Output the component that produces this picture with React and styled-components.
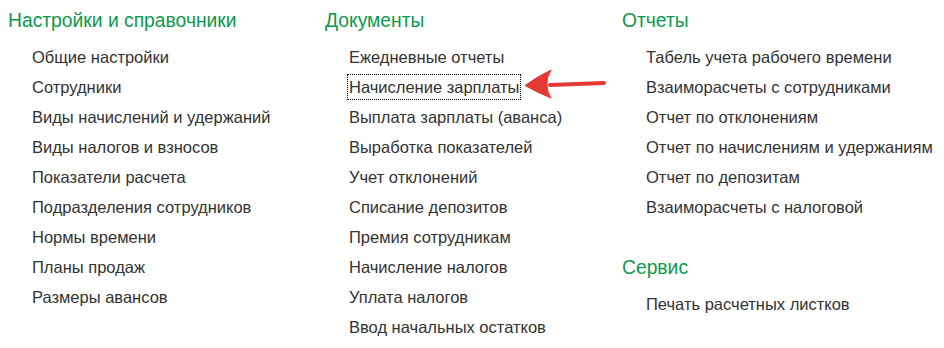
import styled, { createGlobalStyle } from 'styled-components';

const GlobalStyle = createGlobalStyle`
  body {
    margin: 0;
    background: #fff;
    font-family: "Liberation Sans", Arial, sans-serif;
  }
`;

const Page = styled.div`
  position: relative;
  display: grid;
  grid-template-columns: 317px 297px 1fr;
  padding: 9px 0 0 8px;
  width: 944px;
  height: 348px;
  box-sizing: border-box;
`;

const Column = styled.div`
  display: flex;
  flex-direction: column;
`;

const Group = styled.section`
  display: flex;
  flex-direction: column;
  & + & {
    margin-top: 36px;
  }
`;

const Heading = styled.h2`
  margin: 0 0 11px;
  font-size: 19.3px;
  font-weight: normal;
  line-height: 24px;
  color: #0c9a4c;
`;

const List = styled.ul`
  list-style: none;
  margin: 0;
  padding: 0 0 0 22px;
  display: flex;
  flex-direction: column;
  gap: 4px;
`;

const Item = styled.li`
  align-self: flex-start;
  padding: 0 1px;
  border: 1px dotted ${p => (p.$focused ? '#000' : 'transparent')};
  font-size: 16.5px;
  line-height: 24px;
  color: #333;
  cursor: pointer;
  white-space: nowrap;
`;

const Arrow = styled.svg`
  position: absolute;
  left: 520px;
  top: 66px;
  pointer-events: none;
`;

const columns = [
  [
    {
      title: 'Настройки и справочники',
      items: [
        'Общие настройки',
        'Сотрудники',
        'Виды начислений и удержаний',
        'Виды налогов и взносов',
        'Показатели расчета',
        'Подразделения сотрудников',
        'Нормы времени',
        'Планы продаж',
        'Размеры авансов',
      ],
    },
  ],
  [
    {
      title: 'Документы',
      items: [
        'Ежедневные отчеты',
        'Начисление зарплаты',
        'Выплата зарплаты (аванса)',
        'Выработка показателей',
        'Учет отклонений',
        'Списание депозитов',
        'Премия сотрудникам',
        'Начисление налогов',
        'Уплата налогов',
        'Ввод начальных остатков',
      ],
    },
  ],
  [
    {
      title: 'Отчеты',
      items: [
        'Табель учета рабочего времени',
        'Взаиморасчеты с сотрудниками',
        'Отчет по отклонениям',
        'Отчет по начислениям и удержаниям',
        'Отчет по депозитам',
        'Взаиморасчеты с налоговой',
      ],
    },
    {
      title: 'Сервис',
      items: ['Печать расчетных листков'],
    },
  ],
];

export default function App() {
  return (
    <>
      <GlobalStyle />
      <Page>
        {columns.map((groups, i) => (
          <Column key={i}>
            {groups.map(g => (
              <Group key={g.title}>
                <Heading>{g.title}</Heading>
                <List>
                  {g.items.map(it => (
                    <Item key={it} $focused={it === 'Начисление зарплаты'}>
                      {it}
                    </Item>
                  ))}
                </List>
              </Group>
            ))}
          </Column>
        ))}
        <Arrow width="92" height="36" viewBox="0 0 92 36">
          <path d="M84 17 L30 19" stroke="#e53935" strokeWidth="4" strokeLinecap="round" fill="none" />
          <path
            d="M5 19.5 Q18 10 31 4 Q26 12 27 19 Q27 26 31 32 Q18 27 5 19.5 Z"
            fill="#e53935"
            stroke="#e53935"
            strokeWidth="1"
            strokeLinejoin="round"
          />
        </Arrow>
      </Page>
    </>
  );
}
